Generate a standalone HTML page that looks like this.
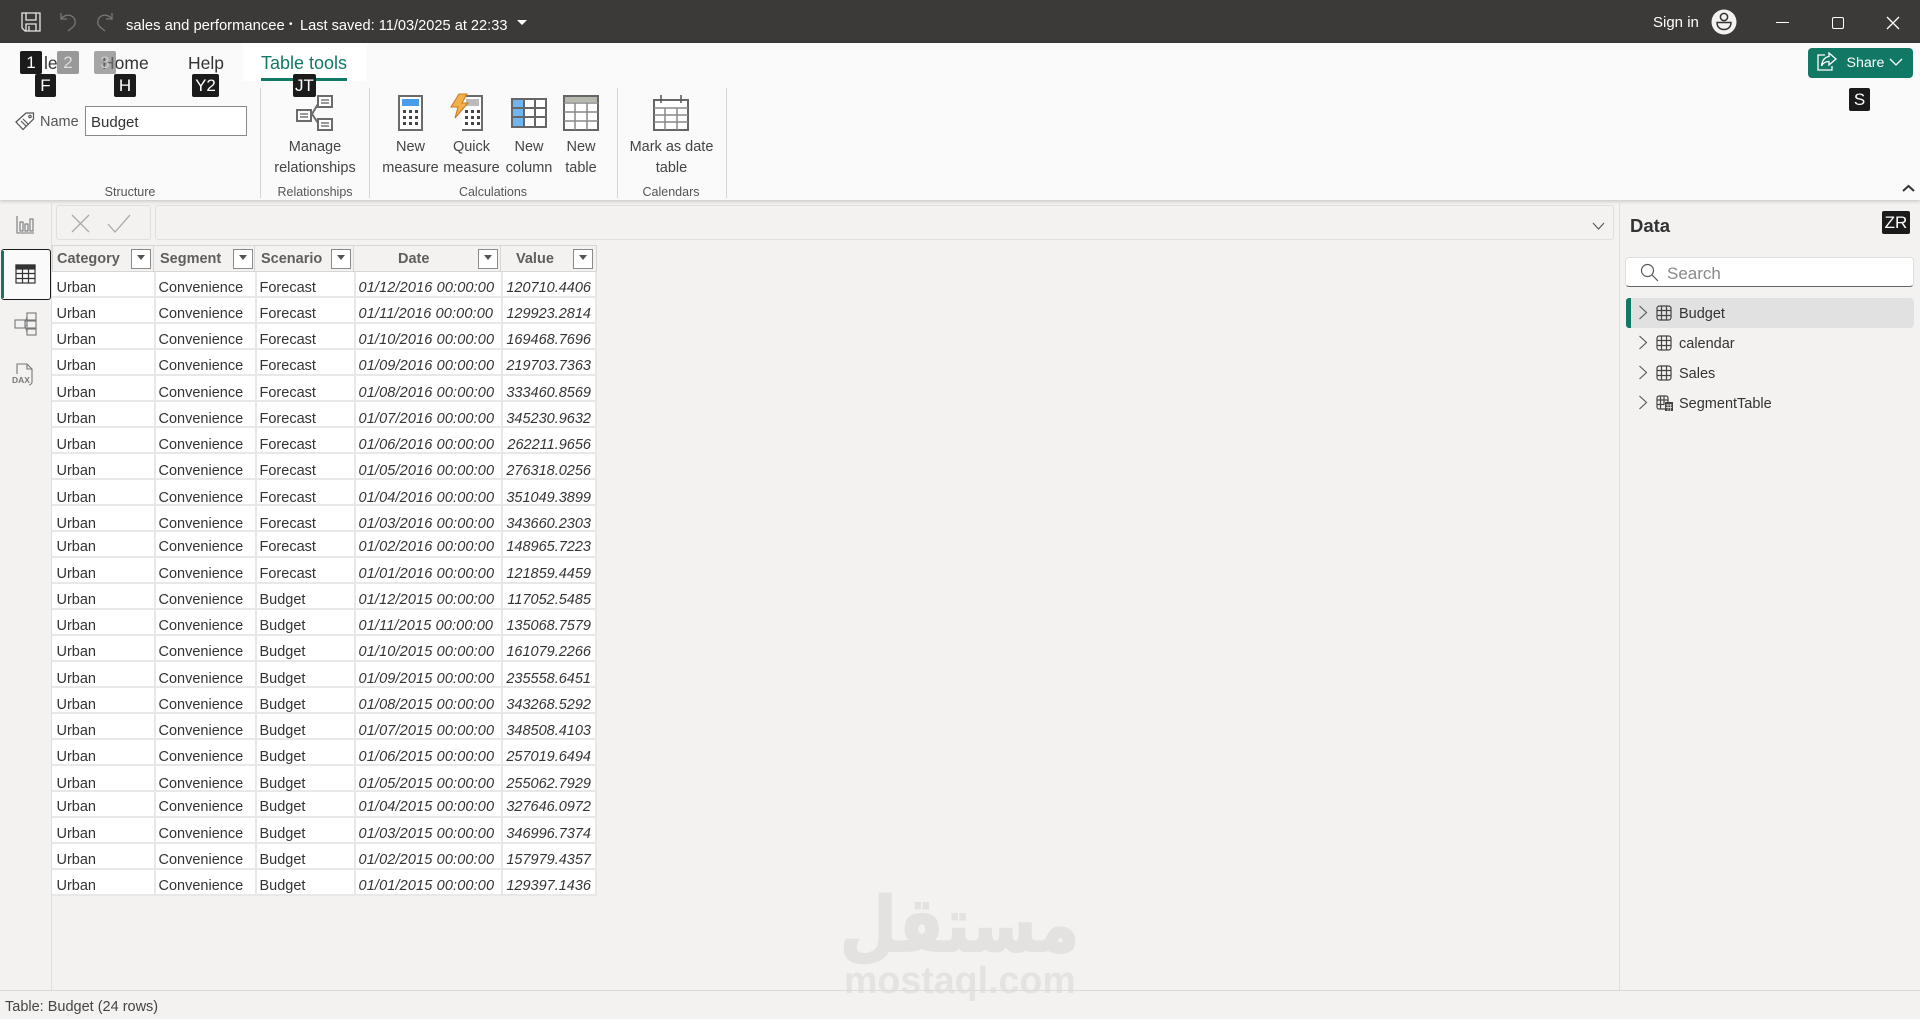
<!DOCTYPE html>
<html><head><meta charset="utf-8"><title>sales and performancee</title>
<style>
*{box-sizing:border-box}
html,body{margin:0;padding:0;width:1920px;height:1019px;overflow:hidden;background:#f3f2f1;font-family:"Liberation Sans",sans-serif;color:#333}
.a{position:absolute;white-space:nowrap}
.c{text-align:center;transform:translateX(-50%)}
.tip{position:absolute;background:#1b1b1b;color:#fff;font-size:17px;line-height:24px;height:23px;text-align:center;border-radius:2px}
.rb{font-size:14.5px;color:#444;line-height:20.5px;text-align:center}
.gl{font-size:12.5px;color:#555}
.sep{position:absolute;width:1px;top:88px;height:110px;background:#d4d4d4}
.r{position:absolute;left:52px;width:545px;height:26px;background:#fff;border-bottom:2px solid #e8e8e8}
.r span{position:absolute;top:3px;line-height:26px;font-size:14.5px;color:#333;white-space:nowrap}
.d1 span{top:4px}.d2 span{top:5px}.dm span{top:2px}
.r .s1{left:4.5px}.r .s2{left:106.5px}.r .s3{left:207.5px}
.r .s4{left:306.5px;font-style:italic;letter-spacing:.14px}.r .s5{right:6px;font-style:italic;letter-spacing:0}
.h{position:absolute;top:245px;height:27px;background:#f3f2f1;border:1px solid #d6d6d6;border-left:0}
.ht{position:absolute;top:246px;line-height:27px;font-size:14.5px;font-weight:bold;color:#605e5c;white-space:nowrap}
.fb{position:absolute;top:249px;width:20px;height:20px;background:#fff;border:1px solid #8a8a8a}
.fb:after{content:"";position:absolute;left:5px;top:5px;border-left:4px solid transparent;border-right:4px solid transparent;border-top:5px solid #555}
.v{position:absolute;top:272px;width:2px;height:624px;background:#e8e8e8}
.ti{position:absolute;left:1679px;font-size:14.5px;color:#333;line-height:20px}
</style></head><body>

<!-- title bar -->
<div class="a" style="left:0;top:0;width:1920px;height:43px;background:#3b3a39"></div>
<svg class="a" style="left:20px;top:11px" width="22" height="22" viewBox="0 0 22 22" fill="none" stroke="#e8e8e8" stroke-width="1.3"><path d="M2 2H20V20H5L2 17Z"/><path d="M6 2V9H16V2M6 20V13H16V20M9 15V20"/></svg>
<svg class="a" style="left:59px;top:12px" width="18" height="20" viewBox="0 0 18 20" fill="none" stroke="#777" stroke-width="1.3"><path d="M2 1V7H8M2 7C5 3 10 2 13.500 4.500C17 7.500 17 12 14 15L9 19"/></svg>
<svg class="a" style="left:96px;top:12px" width="18" height="20" viewBox="0 0 18 20" fill="none" stroke="#777" stroke-width="1.3"><path d="M16 1V7H10M16 7C13 3 8 2 4.500 4.500C1 7.500 1 12 4 15L9 19"/></svg>
<div class="a" style="left:126px;top:17px;font-size:14.8px;line-height:18px;color:#fff">sales and performancee</div>
<div class="a" style="left:289px;top:16px;font-size:10px;line-height:18px;color:#fff">&#8226;</div>
<div class="a" style="left:300px;top:17px;font-size:14.6px;line-height:18px;color:#fff">Last saved: 11/03/2025 at 22:33</div>
<div class="a" style="left:517px;top:20px;border-left:5px solid transparent;border-right:5px solid transparent;border-top:5px solid #fff"></div>
<div class="a" style="left:1653px;top:14px;font-size:15px;line-height:18px;color:#fff">Sign in</div>
<svg class="a" style="left:1711px;top:9px" width="26" height="26" viewBox="0 0 26 26"><circle cx="13" cy="13" r="12.500" fill="#f3f2f1"/><circle cx="13" cy="8" r="3.600" fill="none" stroke="#333" stroke-width="1.500"/><path d="M6 13.500H20C20 18 17 20.500 13 20.500C9 20.500 6 18 6 13.500Z" fill="none" stroke="#333" stroke-width="1.500"/></svg>
<div class="a" style="left:1776px;top:22px;width:13px;height:1px;background:#fff"></div>
<div class="a" style="left:1832px;top:17px;width:12px;height:12px;border:1.300px solid #fff;border-radius:2px"></div>
<svg class="a" style="left:1886px;top:16px" width="14" height="14" viewBox="0 0 14 14" stroke="#fff" stroke-width="1.300"><path d="M1 1L13 13M13 1L1 13"/></svg>

<!-- ribbon -->
<div class="a" style="left:0;top:43px;width:1920px;height:157px;background:#fafafa;box-shadow:0 1px 4px rgba(0,0,0,.22)"></div>
<div class="a" style="left:243px;top:43px;width:123px;height:38px;background:#fff"></div>
<div class="a" style="left:261px;top:78px;width:86px;height:3px;background:#117865"></div>
<div class="a" style="left:261px;top:52px;font-size:18px;line-height:22px;color:#117865">Table tools</div>
<div class="a" style="left:102px;top:52px;font-size:17.500px;line-height:22px;color:#333">Home</div>
<div class="a" style="left:188px;top:52px;font-size:17.500px;line-height:22px;color:#333">Help</div>
<div class="a" style="left:44px;top:52px;font-size:17.500px;line-height:22px;color:#333">le</div>
<div class="tip" style="left:20px;top:51px;width:22px">1</div>
<div class="tip" style="left:57px;top:51px;width:22px;background:#999;color:#ddd">2</div>
<div class="tip" style="left:94px;top:51px;width:22px;background:rgba(120,120,120,.65);color:#ccc">3</div>
<div class="tip" style="left:35px;top:74px;width:21px">F</div>
<div class="tip" style="left:114px;top:74px;width:22px">H</div>
<div class="tip" style="left:192px;top:74px;width:27px">Y2</div>
<div class="tip" style="left:293px;top:74px;width:23px">JT</div>
<div class="tip" style="left:1849px;top:88px;width:21px">S</div>
<div class="tip" style="left:1882px;top:211px;width:28px">ZR</div>

<!-- name -->
<svg class="a" style="left:15px;top:111px" width="20" height="20" viewBox="0 0 20 20" fill="none" stroke="#555" stroke-width="1.200"><path d="M1 11L11 2H18.500V8L8 18.500Z"/><circle cx="15" cy="5.500" r="1.200"/><path d="M6 10L11 15M8 8L13 13"/></svg>
<div class="a" style="left:40px;top:112px;font-size:14.500px;line-height:20px;color:#555">Name</div>
<div class="a" style="left:85px;top:106px;width:162px;height:30px;background:#fff;border:1px solid #8a8a8a;font-size:15px;line-height:31px;padding-left:5px;color:#333">Budget</div>

<div class="sep" style="left:260px"></div><div class="sep" style="left:369px"></div><div class="sep" style="left:617px"></div><div class="sep" style="left:726px"></div>
<div class="a c gl" style="left:130px;top:185px">Structure</div>
<div class="a c gl" style="left:315px;top:185px">Relationships</div>
<div class="a c gl" style="left:493px;top:185px">Calculations</div>
<div class="a c gl" style="left:671px;top:185px">Calendars</div>

<!-- ribbon icons -->
<svg class="a" style="left:296px;top:94px" width="38" height="38" viewBox="0 0 38 38" fill="#fff" stroke="#6b6b6b" stroke-width="2"><rect x="1" y="16" width="14" height="11"/><rect x="22" y="2" width="14" height="11"/><rect x="22" y="25" width="14" height="11"/><path d="M22 10L16 20L22 29" fill="none"/><path d="M4 20H12M4 23H12M25 6H33M25 9H33M25 29H33M25 32H33" stroke="#999"/></svg>
<svg class="a" style="left:398px;top:95px" width="25" height="36" viewBox="0 0 25 36"><rect x="1" y="1" width="23" height="34" fill="#fff" stroke="#6b6b6b" stroke-width="2"/><rect x="4" y="4" width="17" height="7" fill="#4a9ee8"/><path d="M5 15h3v3h-3zM11 15h3v3h-3zM17 15h3v3h-3zM5 21h3v3h-3zM11 21h3v3h-3zM17 21h3v3h-3zM5 27h3v3h-3zM11 27h3v3h-3zM17 27h3v3h-3z" fill="#444"/></svg>
<svg class="a" style="left:450px;top:93px" width="34" height="38" viewBox="0 0 34 38"><path d="M12 3H32V37H12" fill="#fff" stroke="#6b6b6b" stroke-width="2"/><rect x="16" y="6" width="13" height="7" fill="#bbb"/><path d="M15 17h3v3h-3zM21 17h3v3h-3zM27 17h3v3h-3zM15 23h3v3h-3zM21 23h3v3h-3zM27 23h3v3h-3zM15 29h3v3h-3zM21 29h3v3h-3zM27 29h3v3h-3z" fill="#444"/><path d="M9 1H17L12 10H18L5 25L8 14H1Z" fill="#f3b04a" stroke="#c8761e" stroke-width="1"/></svg>
<svg class="a" style="left:511px;top:98px" width="36" height="30" viewBox="0 0 36 30"><rect x="1" y="1" width="34" height="28" fill="#fff"/><rect x="1" y="1" width="12" height="28" fill="#6eb5f2"/><path d="M1 1H35V29H1ZM13 1V29M24 1V29M1 10H35M1 19H35" fill="none" stroke="#666" stroke-width="2"/></svg>
<svg class="a" style="left:563px;top:95px" width="36" height="36" viewBox="0 0 36 36"><rect x="1" y="1" width="34" height="34" fill="#fff"/><rect x="2" y="2" width="32" height="5" fill="#b5b9ae"/><path d="M1 1H35V35H1Z" fill="none" stroke="#666" stroke-width="2"/><path d="M1 8H35M1 17H35M1 26H35M12 8V35M24 8V35" fill="none" stroke="#888" stroke-width="1.500"/></svg>
<svg class="a" style="left:653px;top:94px" width="36" height="37" viewBox="0 0 36 37"><rect x="1" y="6" width="34" height="30" fill="#fff" stroke="#666" stroke-width="2"/><path d="M1 14H35M1 21H35M1 28H35M12 14V36M24 14V36" fill="none" stroke="#888" stroke-width="1.500"/><path d="M8 1V9M28 1V9" stroke="#555" stroke-width="1.500"/></svg>

<div class="a c rb" style="left:315px;top:137px">Manage<br>relationships</div>
<div class="a c rb" style="left:410.500px;top:137px">New<br>measure</div>
<div class="a c rb" style="left:471.500px;top:137px">Quick<br>measure</div>
<div class="a c rb" style="left:529px;top:137px">New<br>column</div>
<div class="a c rb" style="left:581px;top:137px">New<br>table</div>
<div class="a c rb" style="left:671.500px;top:137px">Mark as date<br>table</div>

<!-- share -->
<div class="a" style="left:1808px;top:48px;width:105px;height:30px;background:#117865;border-radius:4px"></div>
<svg class="a" style="left:1816px;top:52px" width="22" height="20" viewBox="0 0 22 20" fill="none" stroke="#fff" stroke-width="1.300"><path d="M9 3H2V18H16V14"/><path d="M13 1L20 7L13 13V9.500C9 9.500 7 11 5.500 14C6 9 8.500 5 13 4.500Z"/></svg>
<div class="a" style="left:1846.500px;top:54px;font-size:14.200px;line-height:18px;color:#fff">Share</div>
<svg class="a" style="left:1889px;top:58px" width="14" height="9" viewBox="0 0 14 9" fill="none" stroke="#fff" stroke-width="1.300"><path d="M1 1L7 7L13 1"/></svg>
<svg class="a" style="left:1902px;top:184px" width="13" height="9" viewBox="0 0 13 9" fill="none" stroke="#333" stroke-width="2"><path d="M1 7L6.500 2L12 7"/></svg>

<!-- left rail -->
<div class="a" style="left:51px;top:200px;width:1px;height:790px;background:#e1dfdd"></div>
<svg class="a" style="left:16px;top:215px" width="19" height="19" viewBox="0 0 19 19" fill="none" stroke="#777" stroke-width="1.100"><path d="M1 1V18H18"/><rect x="4" y="7" width="3" height="9"/><rect x="9" y="9" width="3" height="7"/><rect x="14" y="4" width="3" height="12"/></svg>
<div class="a" style="left:1px;top:249px;width:50px;height:51px;border:1.500px solid #1b1b1b;border-radius:3px;background:#fafafa"></div>
<div class="a" style="left:1px;top:251px;width:3px;height:47px;background:#117865"></div>
<svg class="a" style="left:15px;top:264px" width="21" height="20" viewBox="0 0 21 20" fill="none" stroke="#333" stroke-width="1.200"><rect x="1" y="1" width="19" height="18"/><rect x="1" y="1" width="19" height="4" fill="#333"/><path d="M1 9.500H20M1 14.500H20M7.500 5V19M13.500 5V19"/></svg>
<svg class="a" style="left:14px;top:312px" width="23" height="24" viewBox="0 0 23 24" fill="none" stroke="#777" stroke-width="1.100"><rect x="1" y="8" width="10" height="8"/><rect x="13" y="1" width="9" height="7"/><rect x="13" y="9" width="9" height="7"/><rect x="13" y="17" width="9" height="6"/><path d="M11 11L13 5M11 13H13M11 14L13 20"/></svg>
<svg class="a" style="left:12px;top:362px" width="24" height="25" viewBox="0 0 24 25" fill="none" stroke="#777" stroke-width="1.100"><path d="M5 12V2H15L20 7V20C20 22 18 23 17 23"/><path d="M15 2V7H20"/></svg>
<div class="a" style="left:12px;top:375px;font-size:8.500px;font-weight:bold;color:#777;line-height:10px">DAX</div>

<!-- formula bar -->
<div class="a" style="left:56px;top:205px;width:95px;height:35px;border:1px solid #e1dfdd;border-radius:3px"></div>
<div class="a" style="left:155px;top:205px;width:1459px;height:35px;border:1px solid #e1dfdd;border-radius:3px"></div>
<svg class="a" style="left:71px;top:214px" width="19" height="19" viewBox="0 0 19 19" stroke="#aaa" stroke-width="1.300"><path d="M1 1L18 18M18 1L1 18"/></svg>
<svg class="a" style="left:107px;top:214px" width="24" height="19" viewBox="0 0 24 19" fill="none" stroke="#aaa" stroke-width="1.300"><path d="M1 10L8 18L23 1"/></svg>
<svg class="a" style="left:1592px;top:222px" width="13" height="8" viewBox="0 0 13 8" fill="none" stroke="#555" stroke-width="1.100"><path d="M1 1L6.500 7L12 1"/></svg>

<!-- table -->
<div class="h" style="left:52px;width:102px;border-left:1px solid #d6d6d6"></div>
<div class="h" style="left:154px;width:101px"></div>
<div class="h" style="left:255px;width:99px"></div>
<div class="h" style="left:354px;width:147px"></div>
<div class="h" style="left:501px;width:96px"></div>
<div class="ht" style="left:57px">Category</div><div class="fb" style="left:131px"></div>
<div class="ht" style="left:160px">Segment</div><div class="fb" style="left:233px"></div>
<div class="ht" style="left:261px">Scenario</div><div class="fb" style="left:331px"></div>
<div class="ht" style="left:398px">Date</div><div class="fb" style="left:478px"></div>
<div class="ht" style="left:516px">Value</div><div class="fb" style="left:573px"></div>

<div class="r" style="top:272px"><span class="s1">Urban</span><span class="s2">Convenience</span><span class="s3">Forecast</span><span class="s4">01/12/2016 00:00:00</span><span class="s5">120710.4406</span></div>
<div class="r" style="top:298px"><span class="s1">Urban</span><span class="s2">Convenience</span><span class="s3">Forecast</span><span class="s4">01/11/2016 00:00:00</span><span class="s5">129923.2814</span></div>
<div class="r" style="top:324px"><span class="s1">Urban</span><span class="s2">Convenience</span><span class="s3">Forecast</span><span class="s4">01/10/2016 00:00:00</span><span class="s5">169468.7696</span></div>
<div class="r" style="top:350px"><span class="s1">Urban</span><span class="s2">Convenience</span><span class="s3">Forecast</span><span class="s4">01/09/2016 00:00:00</span><span class="s5">219703.7363</span></div>
<div class="r d1" style="top:376px"><span class="s1">Urban</span><span class="s2">Convenience</span><span class="s3">Forecast</span><span class="s4">01/08/2016 00:00:00</span><span class="s5">333460.8569</span></div>
<div class="r d1" style="top:402px"><span class="s1">Urban</span><span class="s2">Convenience</span><span class="s3">Forecast</span><span class="s4">01/07/2016 00:00:00</span><span class="s5">345230.9632</span></div>
<div class="r d1" style="top:428px"><span class="s1">Urban</span><span class="s2">Convenience</span><span class="s3">Forecast</span><span class="s4">01/06/2016 00:00:00</span><span class="s5">262211.9656</span></div>
<div class="r d1" style="top:454px"><span class="s1">Urban</span><span class="s2">Convenience</span><span class="s3">Forecast</span><span class="s4">01/05/2016 00:00:00</span><span class="s5">276318.0256</span></div>
<div class="r d2" style="top:480px"><span class="s1">Urban</span><span class="s2">Convenience</span><span class="s3">Forecast</span><span class="s4">01/04/2016 00:00:00</span><span class="s5">351049.3899</span></div>
<div class="r d2" style="top:506px"><span class="s1">Urban</span><span class="s2">Convenience</span><span class="s3">Forecast</span><span class="s4">01/03/2016 00:00:00</span><span class="s5">343660.2303</span></div>
<div class="r dm" style="top:532px"><span class="s1">Urban</span><span class="s2">Convenience</span><span class="s3">Forecast</span><span class="s4">01/02/2016 00:00:00</span><span class="s5">148965.7223</span></div>
<div class="r" style="top:558px"><span class="s1">Urban</span><span class="s2">Convenience</span><span class="s3">Forecast</span><span class="s4">01/01/2016 00:00:00</span><span class="s5">121859.4459</span></div>
<div class="r" style="top:584px"><span class="s1">Urban</span><span class="s2">Convenience</span><span class="s3">Budget</span><span class="s4">01/12/2015 00:00:00</span><span class="s5">117052.5485</span></div>
<div class="r" style="top:610px"><span class="s1">Urban</span><span class="s2">Convenience</span><span class="s3">Budget</span><span class="s4">01/11/2015 00:00:00</span><span class="s5">135068.7579</span></div>
<div class="r" style="top:636px"><span class="s1">Urban</span><span class="s2">Convenience</span><span class="s3">Budget</span><span class="s4">01/10/2015 00:00:00</span><span class="s5">161079.2266</span></div>
<div class="r d1" style="top:662px"><span class="s1">Urban</span><span class="s2">Convenience</span><span class="s3">Budget</span><span class="s4">01/09/2015 00:00:00</span><span class="s5">235558.6451</span></div>
<div class="r d1" style="top:688px"><span class="s1">Urban</span><span class="s2">Convenience</span><span class="s3">Budget</span><span class="s4">01/08/2015 00:00:00</span><span class="s5">343268.5292</span></div>
<div class="r d1" style="top:714px"><span class="s1">Urban</span><span class="s2">Convenience</span><span class="s3">Budget</span><span class="s4">01/07/2015 00:00:00</span><span class="s5">348508.4103</span></div>
<div class="r d1" style="top:740px"><span class="s1">Urban</span><span class="s2">Convenience</span><span class="s3">Budget</span><span class="s4">01/06/2015 00:00:00</span><span class="s5">257019.6494</span></div>
<div class="r d2" style="top:766px"><span class="s1">Urban</span><span class="s2">Convenience</span><span class="s3">Budget</span><span class="s4">01/05/2015 00:00:00</span><span class="s5">255062.7929</span></div>
<div class="r dm" style="top:792px"><span class="s1">Urban</span><span class="s2">Convenience</span><span class="s3">Budget</span><span class="s4">01/04/2015 00:00:00</span><span class="s5">327646.0972</span></div>
<div class="r" style="top:818px"><span class="s1">Urban</span><span class="s2">Convenience</span><span class="s3">Budget</span><span class="s4">01/03/2015 00:00:00</span><span class="s5">346996.7374</span></div>
<div class="r" style="top:844px"><span class="s1">Urban</span><span class="s2">Convenience</span><span class="s3">Budget</span><span class="s4">01/02/2015 00:00:00</span><span class="s5">157979.4357</span></div>
<div class="r" style="top:870px"><span class="s1">Urban</span><span class="s2">Convenience</span><span class="s3">Budget</span><span class="s4">01/01/2015 00:00:00</span><span class="s5">129397.1436</span></div>
<div class="v" style="left:154px"></div><div class="v" style="left:255px"></div><div class="v" style="left:354px"></div><div class="v" style="left:501px"></div><div class="v" style="left:595px"></div>

<!-- data pane -->
<div class="a" style="left:1619px;top:200px;width:1px;height:790px;background:#e1dfdd"></div>
<div class="a" style="left:1630px;top:215px;font-size:18.500px;font-weight:bold;line-height:22px;color:#333">Data</div>
<div class="a" style="left:1625px;top:257px;width:289px;height:30px;background:#fff;border:1px solid #e1dfdd;border-bottom:1px solid #666;border-radius:4px"></div>
<svg class="a" style="left:1640px;top:263px" width="19" height="19" viewBox="0 0 19 19" fill="none" stroke="#555" stroke-width="1.200"><circle cx="7.500" cy="7.500" r="6"/><path d="M12 12L18 18"/></svg>
<div class="a" style="left:1667px;top:264px;font-size:17px;line-height:20px;color:#888">Search</div>
<div class="a" style="left:1626px;top:298px;width:288px;height:30px;background:#e1e1e1;border-radius:4px"></div>
<div class="a" style="left:1626px;top:298px;width:5px;height:30px;background:#117865;border-radius:3px 0 0 3px"></div>

<svg class="a" style="left:1638px;top:305px" width="10" height="15" viewBox="0 0 10 15" fill="none" stroke="#555" stroke-width="1.100"><path d="M1.500 1L8.500 7.500L1.500 14"/></svg>
<svg class="a" style="left:1638px;top:335px" width="10" height="15" viewBox="0 0 10 15" fill="none" stroke="#555" stroke-width="1.100"><path d="M1.500 1L8.500 7.500L1.500 14"/></svg>
<svg class="a" style="left:1638px;top:365px" width="10" height="15" viewBox="0 0 10 15" fill="none" stroke="#555" stroke-width="1.100"><path d="M1.500 1L8.500 7.500L1.500 14"/></svg>
<svg class="a" style="left:1638px;top:395px" width="10" height="15" viewBox="0 0 10 15" fill="none" stroke="#555" stroke-width="1.100"><path d="M1.500 1L8.500 7.500L1.500 14"/></svg>
<svg class="a" style="left:1656px;top:305px" width="16" height="16" viewBox="0 0 16 16" fill="none" stroke="#444" stroke-width="1.200"><rect x="1" y="1" width="14" height="14" rx="2.500"/><path d="M1 5.500H15M1 10.500H15M5.500 1V15M10.500 1V15"/></svg>
<svg class="a" style="left:1656px;top:335px" width="16" height="16" viewBox="0 0 16 16" fill="none" stroke="#444" stroke-width="1.200"><rect x="1" y="1" width="14" height="14" rx="2.500"/><path d="M1 5.500H15M1 10.500H15M5.500 1V15M10.500 1V15"/></svg>
<svg class="a" style="left:1656px;top:365px" width="16" height="16" viewBox="0 0 16 16" fill="none" stroke="#444" stroke-width="1.200"><rect x="1" y="1" width="14" height="14" rx="2.500"/><path d="M1 5.500H15M1 10.500H15M5.500 1V15M10.500 1V15"/></svg>
<svg class="a" style="left:1656px;top:395px" width="18" height="17" viewBox="0 0 18 17" fill="none" stroke="#444" stroke-width="1.200"><rect x="1" y="1" width="11" height="13" rx="2"/><path d="M1 5H12M1 9.500H8M4.500 1V14M8 1V10"/><rect x="9" y="7" width="8" height="9" fill="#444" stroke="none"/><path d="M10 10H16M10 12.500H16M12 9V16M14.500 9V16" stroke="#f3f2f1" stroke-width=".7"/></svg>
<div class="ti" style="top:304px">Budget</div>
<div class="ti" style="top:334px">calendar</div>
<div class="ti" style="top:364px">Sales</div>
<div class="ti" style="top:394px">SegmentTable</div>

<!-- watermark -->
<div class="a" style="left:799px;top:877px;width:280px;text-align:right;font-family:'DejaVu Sans',sans-serif;font-weight:bold;font-size:76px;line-height:96px;color:#e3e2e1;-webkit-text-stroke:2px #e3e2e1;direction:rtl;transform:scaleX(.86);transform-origin:right center">مستقل</div>
<div class="a" style="left:844px;top:957px;font-size:37.600px;line-height:46px;font-weight:bold;color:#e4e3e2">mostaql.com</div>

<!-- status -->
<div class="a" style="left:0;top:990px;width:1920px;height:1px;background:#dcdbda"></div>
<div class="a" style="left:5px;top:998px;font-size:14.500px;line-height:18px;color:#444">Table: Budget (24 rows)</div>
</body></html>
